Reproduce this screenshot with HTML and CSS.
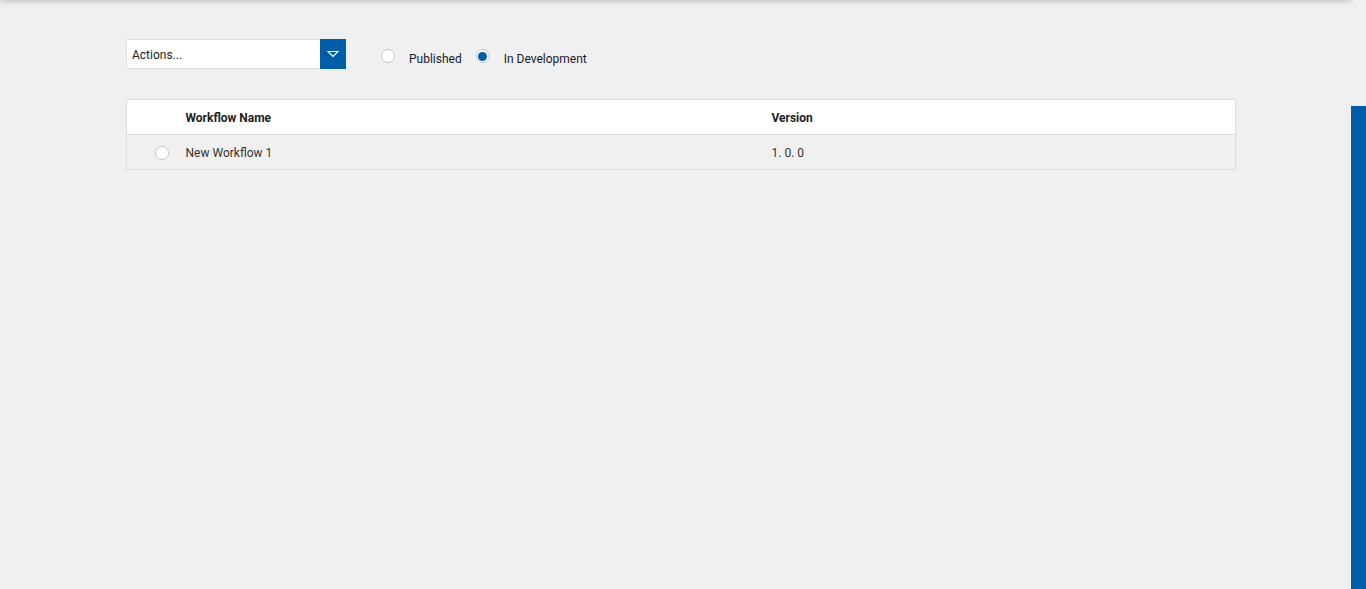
FILE: index.html
```html
<!DOCTYPE html>
<html lang="en">
<head>
    <meta charset="UTF-8">
    <title>Workflows</title>
    <link rel="stylesheet" href="styles.css">
</head>
<body>
<div class="topbar"></div>
<div class="sidebar-tab"></div>
<div class="page">
    <div class="toolbar">
        <div class="actions">
            <div class="actions-label">Actions...</div>
            <div class="actions-button">
                <svg width="12" height="8" viewBox="0 0 12 8">
                    <path d="M1 1.5 H11 L6 6.5 Z" fill="none" stroke="#fff" stroke-width="1.2"/>
                </svg>
            </div>
        </div>
        <label class="radio-option">
            <span class="radio"></span>
            <span class="radio-text">Published</span>
        </label>
        <label class="radio-option">
            <span class="radio checked"></span>
            <span class="radio-text">In Development</span>
        </label>
    </div>
    <table class="grid">
        <thead>
        <tr>
            <th class="col-select"></th>
            <th class="col-name">Workflow Name</th>
            <th>Version</th>
        </tr>
        </thead>
        <tbody>
        <tr>
            <td class="col-select"><span class="radio"></span></td>
            <td class="col-name">New Workflow 1</td>
            <td>1. 0. 0</td>
        </tr>
        </tbody>
    </table>
</div>
</body>
</html>
```
FILE: styles.css
```css
* {
    box-sizing: border-box;
    margin: 0;
    padding: 0;
}

html, body {
    height: 100%;
    overflow: hidden;
}

body {
    background-color: #f0f0f0;
    font-family: Roboto, "Liberation Sans", sans-serif;
    color: #222;
}

.topbar {
    position: absolute;
    top: -20px;
    left: 0;
    width: 1351px;
    height: 20px;
    background-color: #f0f0f0;
    box-shadow: 0 1px 6px rgba(0, 0, 0, 0.22);
}

.sidebar-tab {
    position: absolute;
    top: 106px;
    right: 0;
    bottom: 0;
    width: 15px;
    background-color: #005ea8;
}

.page {
    padding: 39px 130px 0 126px;
}

.toolbar {
    display: flex;
    align-items: center;
    height: 30px;
}

.actions {
    display: flex;
    width: 220px;
    height: 30px;
    margin-right: 35px;
}

.actions-label {
    flex: 1;
    background-color: #fff;
    border: 1px solid #dedede;
    border-right: none;
    padding: 1px 5px 0;
    font-size: 12px;
    line-height: 28px;
    color: #222;
}

.actions-button {
    width: 26px;
    background-color: #005ea8;
    display: flex;
    align-items: center;
    justify-content: center;
}

.radio-option {
    display: flex;
    align-items: center;
    margin-top: 10px;
    margin-right: 14px;
}

.radio {
    display: inline-block;
    width: 14px;
    height: 14px;
    border-radius: 50%;
    border: 1px solid #c4c4c4;
    background-color: #fff;
    position: relative;
    top: -3px;
}

.radio.checked::after {
    content: "";
    position: absolute;
    left: 1.5px;
    top: 1.5px;
    width: 9px;
    height: 9px;
    border-radius: 50%;
    background-color: #005ea8;
}

.radio-text {
    margin-left: 14px;
    font-size: 12px;
    color: #1a1a2e;
}

.grid {
    width: 1110px;
    margin-top: 30px;
    border-collapse: collapse;
    font-size: 12px;
}

.grid th, .grid td {
    height: 35px;
    text-align: left;
    padding: 2px 0 0;
    border-top: 1px solid #dcdcdc;
    border-bottom: 1px solid #dcdcdc;
}

.grid tr > :first-child {
    border-left: 1px solid #dcdcdc;
}

.grid tr > :last-child {
    border-right: 1px solid #dcdcdc;
}

.grid thead tr {
    background-color: #fff;
}

.grid th {
    font-weight: bold;
    font-size: 12px;
    color: #222;
}

.grid tbody tr {
    background-color: #f0f0f0;
}

.grid td {
    color: #333;
}

.col-select {
    width: 59px;
    text-align: center;
}

.grid td.col-select {
    text-align: right;
    padding: 0 17px 0 0;
}

.grid td.col-select .radio {
    top: 1px;
    vertical-align: middle;
}

.col-name {
    width: 586px;
}
```
